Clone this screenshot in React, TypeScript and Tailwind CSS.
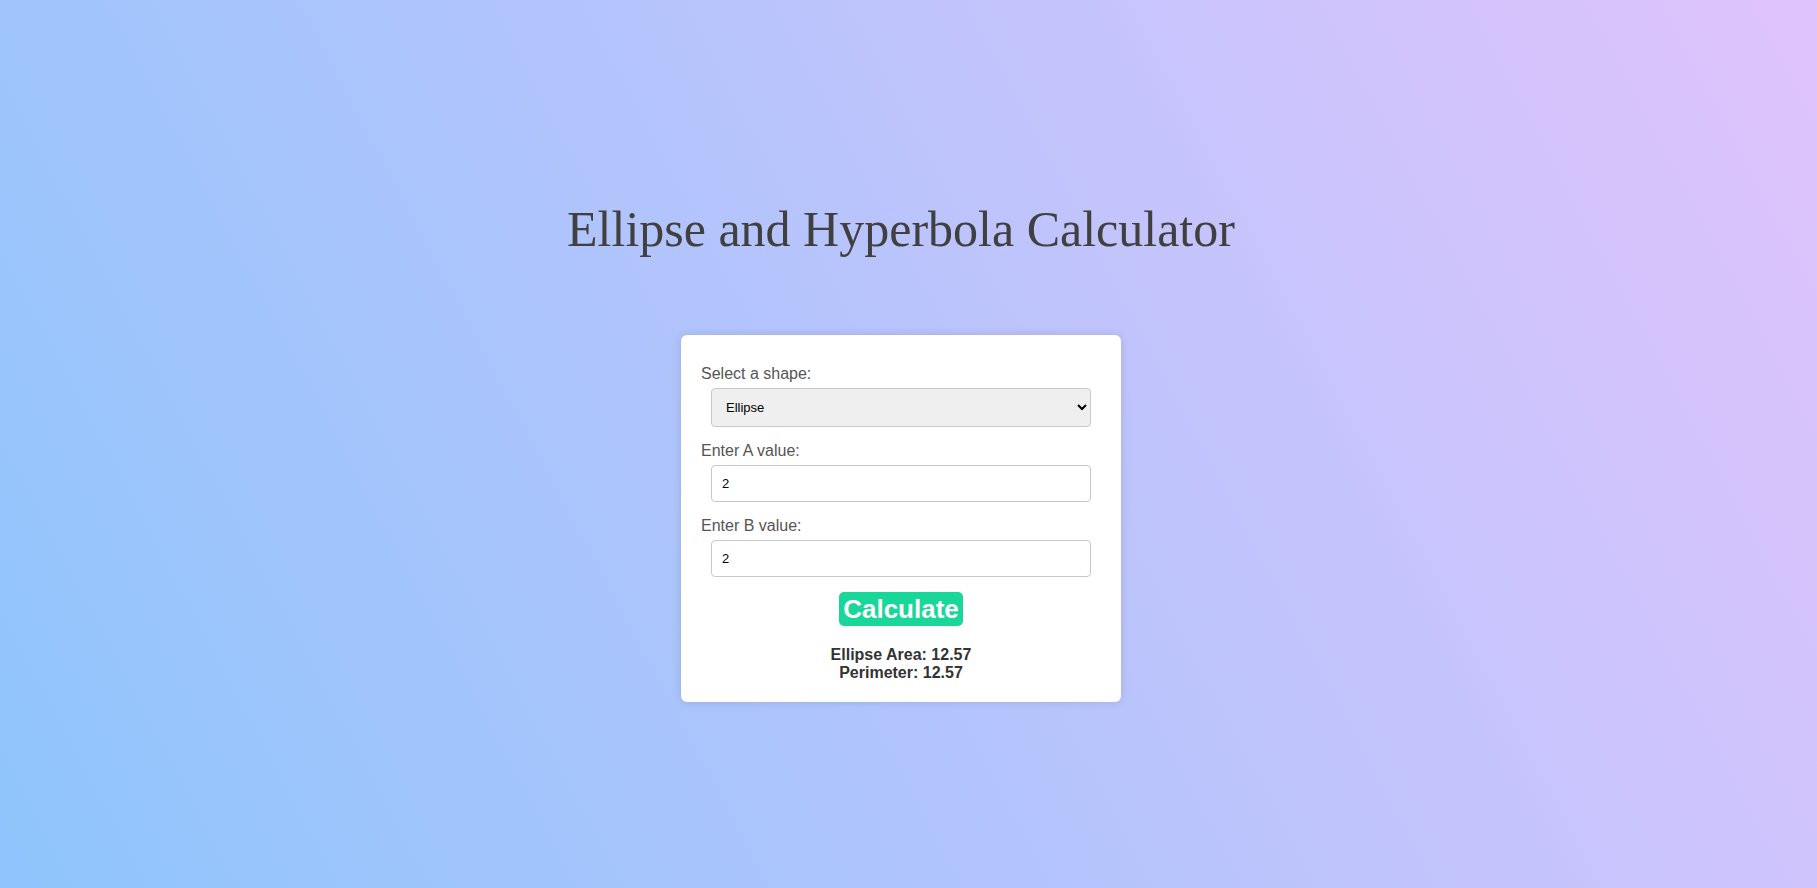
import React, { useState } from 'react';

type Shape = 'ellipse' | 'hyperbola';

export default function App() {
  const [shape, setShape] = useState<Shape>('ellipse');
  const [a, setA] = useState('2');
  const [b, setB] = useState('2');
  const [result, setResult] = useState<string[]>(['Ellipse Area: 12.57', 'Perimeter: 12.57']);

  // Work out area / perimeter for the chosen shape
  const handleCalculate = () => {
    const av = parseFloat(a);
    const bv = parseFloat(b);
    if (isNaN(av) || isNaN(bv)) {
      setResult(['Please enter valid numbers']);
      return;
    }
    if (shape === 'ellipse') {
      const area = Math.PI * av * bv;
      const h = Math.pow(av - bv, 2) / Math.pow(av + bv, 2);
      const perimeter = Math.PI * (av + bv) * (1 + (3 * h) / (10 + Math.sqrt(4 - 3 * h)));
      setResult([`Ellipse Area: ${area.toFixed(2)}`, `Perimeter: ${perimeter.toFixed(2)}`]);
    } else {
      const c = Math.sqrt(av * av + bv * bv);
      const e = c / av;
      setResult([`Hyperbola Focal Distance: ${c.toFixed(2)}`, `Eccentricity: ${e.toFixed(2)}`]);
    }
  };

  return (
    <div className="min-h-screen w-full bg-[linear-gradient(62deg,#8EC5FC_0%,#E0C3FC_100%)] font-['Liberation_Sans',Arial,sans-serif]">
      <div className="flex flex-col items-center pt-[201px] pr-[15px] pb-[186px]">
        {/* Header */}
        <h1 className="font-['Liberation_Serif','Times_New_Roman',serif] text-[50px] leading-[56px] text-[#404040] mb-[78px]">
          Ellipse and Hyperbola Calculator
        </h1>

        {/* Calculator card */}
        <div className="w-[440px] bg-white rounded-[6px] shadow-[0_0_10px_rgba(0,0,0,0.12)] px-[20px] pt-[30px] pb-[20px]">
          <label className="block text-[16px] leading-[18px] text-[#555]">Select a shape:</label>
          <select
            value={shape}
            onChange={(e) => setShape(e.target.value as Shape)}
            className="mt-[5px] ml-[10px] block w-[380px] h-[39px] rounded-[4px] border border-[#c8c8c8] bg-[#efefef] px-[10px] text-[13px] text-black"
          >
            <option value="ellipse">Ellipse</option>
            <option value="hyperbola">Hyperbola</option>
          </select>

          <label className="mt-[15px] block text-[16px] leading-[18px] text-[#555]">Enter A value:</label>
          <input
            type="number"
            value={a}
            onChange={(e) => setA(e.target.value)}
            className="mt-[5px] ml-[10px] block w-[380px] h-[37px] rounded-[4px] border border-[#c8c8c8] bg-white px-[10px] text-[13px] text-black outline-none [appearance:textfield] [&::-webkit-inner-spin-button]:appearance-none [&::-webkit-outer-spin-button]:appearance-none"
          />

          <label className="mt-[15px] block text-[16px] leading-[18px] text-[#555]">Enter B value:</label>
          <input
            type="number"
            value={b}
            onChange={(e) => setB(e.target.value)}
            className="mt-[5px] ml-[10px] block w-[380px] h-[37px] rounded-[4px] border border-[#c8c8c8] bg-white px-[10px] text-[13px] text-black outline-none [appearance:textfield] [&::-webkit-inner-spin-button]:appearance-none [&::-webkit-outer-spin-button]:appearance-none"
          />

          <div className="mt-[15px] flex justify-center">
            <button
              onClick={handleCalculate}
              className="h-[34px] rounded-[5px] bg-[#19d699] px-[4px] text-[26px] leading-[30px] font-bold text-white cursor-pointer"
            >
              Calculate
            </button>
          </div>

          <div className="mt-[20px] text-center text-[16px] leading-[18px] font-bold text-[#333]">
            {result.map((line, i) => (
              <div key={i}>{line}</div>
            ))}
          </div>
        </div>
      </div>
    </div>
  );
}
